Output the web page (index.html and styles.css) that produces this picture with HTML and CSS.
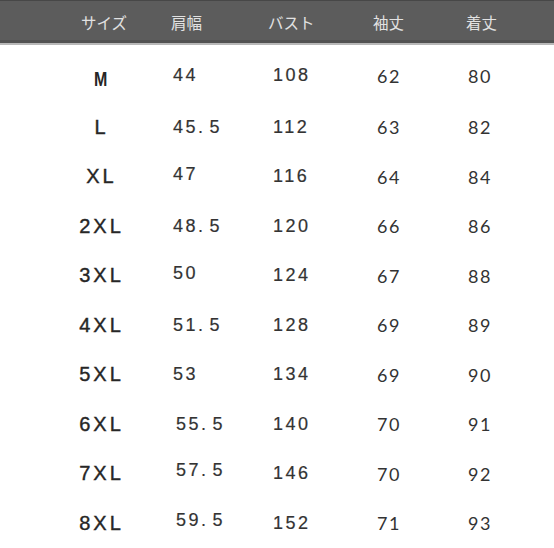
FILE: index.html
```html
<!DOCTYPE html>
<html lang="ja">
<head>
<meta charset="utf-8">
<link rel="stylesheet" href="styles.css">
</head>
<body>
<div class="chart">
  <div class="head">
    <span class="h">サイズ</span>
    <span class="h">肩幅</span>
    <span class="h">バスト</span>
    <span class="h">袖丈</span>
    <span class="h">着丈</span>
  </div>
  <div class="rows">
    <div class="row"><span class="c size"><b class="m">M</b></span><span class="c sh up">44</span><span class="c bu up">108</span><span class="c sl up">62</span><span class="c ln up">80</span></div>
    <div class="row"><span class="c size">L</span><span class="c sh">45<i class="dot">.</i>5</span><span class="c bu">112</span><span class="c sl">63</span><span class="c ln">82</span></div>
    <div class="row"><span class="c size">XL</span><span class="c sh up">47</span><span class="c bu">116</span><span class="c sl">64</span><span class="c ln">84</span></div>
    <div class="row"><span class="c size">2XL</span><span class="c sh">48<i class="dot">.</i>5</span><span class="c bu">120</span><span class="c sl">66</span><span class="c ln">86</span></div>
    <div class="row"><span class="c size">3XL</span><span class="c sh up">50</span><span class="c bu">124</span><span class="c sl">67</span><span class="c ln">88</span></div>
    <div class="row"><span class="c size">4XL</span><span class="c sh">51<i class="dot">.</i>5</span><span class="c bu">128</span><span class="c sl">69</span><span class="c ln">89</span></div>
    <div class="row"><span class="c size">5XL</span><span class="c sh">53</span><span class="c bu">134</span><span class="c sl">69</span><span class="c ln">90</span></div>
    <div class="row"><span class="c size">6XL</span><span class="c sh shift">55<i class="dot">.</i>5</span><span class="c bu">140</span><span class="c sl">70</span><span class="c ln">91</span></div>
    <div class="row"><span class="c size">7XL</span><span class="c sh shift up2">57<i class="dot">.</i>5</span><span class="c bu">146</span><span class="c sl">70</span><span class="c ln">92</span></div>
    <div class="row"><span class="c size">8XL</span><span class="c sh shift up2">59<i class="dot">.</i>5</span><span class="c bu">152</span><span class="c sl">71</span><span class="c ln">93</span></div>
  </div>
</div>
</body>
</html>
```
FILE: styles.css
```css
* { box-sizing: border-box; }
html, body { margin: 0; padding: 0; background: #ffffff; }
body { width: 554px; height: 548px; overflow: hidden; }

.chart { width: 554px; }

.head {
  height: 45px;
  background: #5c5c5c;
  border-top: 1px solid #474747;
  border-bottom: 2px solid #b8b8b8;
  box-shadow: inset 0 -3px 0 #525252;
  display: grid;
  grid-template-columns: 90px 97px 105px 93px 88px;
  align-items: center;
  padding: 3px 0 4px 81px;
  font-family: "Noto Sans CJK JP", "Noto Sans", sans-serif;
  font-size: 15.5px;
  color: #e2e2e2;
}
.h { display: block; text-align: left; }

.rows { padding-top: 8px; }

.row {
  height: 49.5px;
  display: grid;
  grid-template-columns: 173px 100px 104px 91px 86px;
  align-items: center;
  font-family: "Liberation Sans", Arial, sans-serif;
  font-size: 18px;
  color: #333333;
  letter-spacing: 2.5px;
}
.c { display: block; }
.size {
  padding-left: 30px;
  text-align: center;
  font-size: 20px;
  letter-spacing: 3px;
  color: #262626;
  -webkit-text-stroke: 0.4px #262626;
}
.m {
  display: inline-block;
  font-weight: bold;
  transform: scaleX(0.8);
  position: relative;
  top: 2px;
  -webkit-text-stroke: 0;
}
.dot { font-style: normal; margin-right: 4px; }
.shift { padding-left: 3px; }
.up { position: relative; top: -2px; }
.up2 { position: relative; top: -3px; }
.sh, .bu { -webkit-text-stroke: 0.2px #333333; }
.sl, .ln {
  font-family: Lato, "Open Sans", sans-serif;
  font-size: 18px;
  letter-spacing: 1.5px;
  color: #333333;
}
```
